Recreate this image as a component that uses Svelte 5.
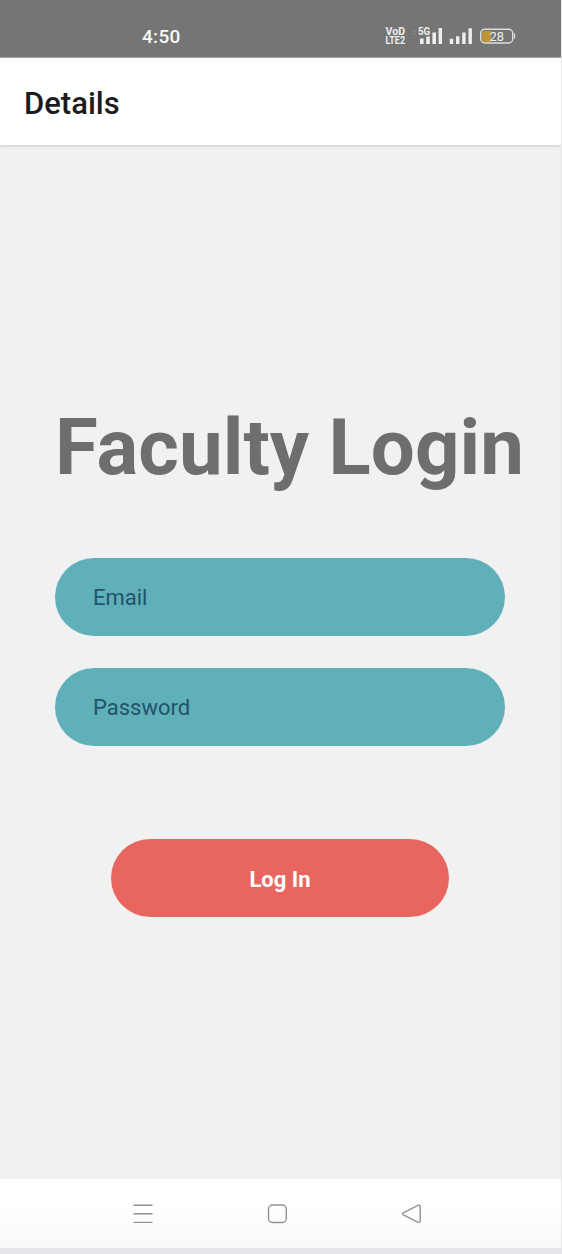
<script>
  let email = $state('');
  let password = $state('');
</script>

<div class="screen">
  <div class="status">
    <span class="time">4:50</span>
    <svg class="indicators" width="134" height="24" viewBox="384 24 134 24">
      <g fill="#eee" font-family="Roboto, sans-serif" font-weight="700">
        <g font-size="10">
          <text x="385.5" y="35.4" textLength="19.5" lengthAdjust="spacingAndGlyphs">VoD</text>
          <text x="385.5" y="44.2" textLength="19.5" lengthAdjust="spacingAndGlyphs">LTE2</text>
        </g>
        <text x="418" y="35" font-size="10.5" textLength="12.2" lengthAdjust="spacingAndGlyphs">5G</text>
        <path d="M420 38.5h3.6V44H420zM426.2 36.5h3.6V44h-3.6zM432.4 32.5h3.6V44h-3.6zM438.6 28h3.4v16h-3.4z" />
        <path d="M449.8 38.8h3.4V44h-3.4zM456 36.2h3.4V44H456zM462.2 32.6h3.4V44h-3.4zM468.5 28.2h3.4V44h-3.4z" />
      </g>
      <path d="M412.5 30.8h3.5M412.5 33.8h3.5" stroke="#8c8c8c" />
      <path d="M483.5 31h7.5v11h-7.5q-1.5 0-1.5-1.5v-8q0-1.5 1.5-1.5z" fill="#bd9434" />
      <rect x="480.7" y="29.2" width="32" height="13.8" rx="4" fill="none" stroke="#dedede" stroke-width="1.4" />
      <path d="M514.2 33.5q1.2 2.6 0 5.2" fill="none" stroke="#dedede" stroke-width="1.2" />
      <text x="489.5" y="40.7" font-size="13" fill="#eee" font-family="Roboto, sans-serif" textLength="14.5" lengthAdjust="spacingAndGlyphs">28</text>
    </svg>
  </div>

  <header>Details</header>

  <main>
    <h1>Faculty Login</h1>
    <input type="text" placeholder="Email" bind:value={email} />
    <input type="password" placeholder="Password" bind:value={password} />
    <button type="button">Log In</button>
  </main>

  <nav>
    <svg width="22" height="22" viewBox="0 0 22 22">
      <path d="M1.5 2.2h19M1.5 10.8h19M1.5 19.4h19" />
    </svg>
    <svg width="22" height="22" viewBox="0 0 22 22">
      <rect x="2.5" y="2" width="17.8" height="17.5" rx="4" />
    </svg>
    <svg width="22" height="22" viewBox="0 0 22 22">
      <path d="M3.3 9.9L17.9 2.4Q20.2 1.5 20.2 3.8V17.8Q20.2 20 17.9 19.1L3.3 11.8Q1.6 10.8 3.3 9.9Z" />
    </svg>
  </nav>
</div>

<style>
  :global(body) {
    background: #f1f1f1;
  }
  .screen {
    box-sizing: border-box;
    width: 562px;
    height: 1254px;
    display: flex;
    flex-direction: column;
    overflow: hidden;
    background: #f1f1f1;
    border-bottom: 6px solid #e6e6ea;
    border-right: 1px solid #e8e8e8;
    font-family: Roboto, sans-serif;
  }
  .status {
    flex: none;
    box-sizing: border-box;
    height: 58px;
    margin-right: -1px;
    padding: 24px 44px 0 142px;
    display: flex;
    align-items: flex-start;
    justify-content: space-between;
    background: #757575;
    border-bottom: 1px solid #a8a8a8;
  }
  .time {
    color: #f8f8f8;
    font-size: 19px;
    font-weight: 500;
    letter-spacing: 0.3px;
    line-height: 25px;
  }
  header {
    flex: none;
    box-sizing: border-box;
    height: 87px;
    padding-left: 24px;
    background: #fff;
    box-shadow: 0 1px 3px rgba(0, 0, 0, 0.18);
    color: #1c1c1e;
    font-size: 31px;
    font-weight: 500;
    line-height: 91px;
  }
  main {
    flex: 1;
    display: flex;
    flex-direction: column;
    align-items: flex-start;
    padding: 257px 0 0 55px;
  }
  h1 {
    margin: 0 0 64px;
    color: #6e6e6e;
    font-size: 78px;
    font-weight: 700;
    line-height: 92px;
    letter-spacing: 0.04px;
    white-space: nowrap;
  }
  input {
    box-sizing: border-box;
    width: 450px;
    height: 78px;
    margin: 0 0 32px;
    padding: 1px 38px 0;
    border: 0;
    border-radius: 39px;
    background: #5fb0b9;
    color: #24536a;
    font-family: inherit;
    font-size: 22px;
  }
  input::placeholder {
    color: #24536a;
    opacity: 1;
  }
  button {
    width: 338px;
    height: 78px;
    margin: 61px 0 0 56px;
    padding: 3px 0 0;
    border: 0;
    border-radius: 39px;
    background: #e96660;
    color: #fff;
    font-family: inherit;
    font-size: 22px;
    font-weight: 700;
  }
  nav {
    flex: none;
    box-sizing: border-box;
    height: 69px;
    padding: 0 139px 0 132px;
    display: flex;
    align-items: center;
    justify-content: space-between;
    background: linear-gradient(#fff 40%, #f9f9f9);
  }
  nav svg {
    fill: none;
    stroke: #929292;
    stroke-width: 1.4;
  }
</style>
